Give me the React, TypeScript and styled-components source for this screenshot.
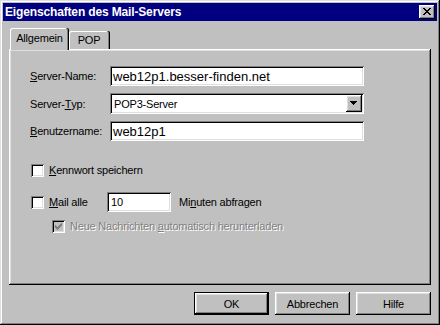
import React from 'react'
import styled, { createGlobalStyle, css } from 'styled-components'

const GlobalStyle = createGlobalStyle`
  html, body {
    margin: 0;
    padding: 0;
    background: #c0c0c0;
  }
  body {
    font-family: "Liberation Sans", Arial, sans-serif;
    font-size: 11px;
    letter-spacing: -0.2px;
    color: #000;
  }
  * {
    box-sizing: border-box;
  }
`

const raised = css`
  box-shadow: inset -1px -1px #000, inset 1px 1px #fff, inset -2px -2px #808080, inset 2px 2px #dfdfdf;
`

const sunken = css`
  box-shadow: inset 1px 1px #808080, inset -1px -1px #fff, inset 2px 2px #000, inset -2px -2px #dfdfdf;
`

const Window = styled.div`
  width: 440px;
  height: 325px;
  padding: 3px;
  background: #c0c0c0;
  display: flex;
  flex-direction: column;
  box-shadow: inset -1px -1px #000, inset 1px 1px #dfdfdf, inset -2px -2px #808080, inset 2px 2px #fff;
`

const TitleBar = styled.div`
  height: 18px;
  background: #000080;
  display: flex;
  align-items: center;
  justify-content: space-between;
  padding: 0 2px 0 2px;
`

const Title = styled.span`
  color: #fff;
  font-weight: bold;
  font-size: 12px;
  letter-spacing: -0.15px;
`

const CloseButton = styled.div`
  width: 16px;
  height: 14px;
  background: #c0c0c0;
  display: flex;
  align-items: center;
  justify-content: center;
  padding: 0 1px 1px 0;
  ${raised}
`

const Body = styled.div`
  flex: 1;
  display: flex;
  flex-direction: column;
  padding: 7px 6px 0 6px;
`

const TabRow = styled.div`
  height: 21px;
  display: flex;
  align-items: flex-end;
  padding-left: 1px;
  position: relative;
  z-index: 1;
`

const Tab = styled.div<{ $active?: boolean; $width: number }>`
  width: ${p => p.$width}px;
  background: #c0c0c0;
  display: flex;
  align-items: center;
  justify-content: center;
  border-radius: 2px 2px 0 0;
  box-shadow: inset -1px 0 #000, inset -2px 0 #808080, inset 1px 1px #fff;
  ${p => p.$active
    ? css`
      height: 22px;
      margin-bottom: -1px;
      padding-bottom: 2px;
    `
    : css`
      height: 18px;
      padding: 0 2px 0 1px;
    `}
`

const Panel = styled.div`
  width: 422px;
  height: 236px;
  background: #c0c0c0;
  padding: 17px 0 0 21px;
  display: flex;
  flex-direction: column;
  box-shadow: inset -1px -1px #000, inset 1px 1px #fff, inset -2px -2px #808080, inset 2px 2px #dfdfdf;
`

const FormGrid = styled.div`
  display: grid;
  grid-template-columns: 80px 254px;
  grid-template-rows: 20px 21px 20px;
  row-gap: 7px;
`

const Label = styled.div`
  display: flex;
  align-items: center;
`

const Key = styled.span`
  text-decoration: underline;
  text-underline-offset: 1px;
`

const Field = styled.div<{ $big?: boolean }>`
  background: #fff;
  display: flex;
  align-items: center;
  padding: 0 3px 0 ${p => (p.$big ? 3 : 4)}px;
  font-size: ${p => (p.$big ? 13 : 11)}px;
  letter-spacing: ${p => (p.$big ? 0 : -0.2)}px;
  white-space: nowrap;
  overflow: hidden;
  ${sunken}
`

const Combo = styled(Field)`
  justify-content: space-between;
  padding: 2px 2px 2px 4px;
`

const DropButton = styled.div`
  width: 16px;
  height: 17px;
  background: #c0c0c0;
  display: flex;
  align-items: center;
  justify-content: center;
  padding: 0 1px 1px 0;
  ${raised}
`

const CheckRow = styled.div<{ $top: number; $indent?: number }>`
  height: 20px;
  display: flex;
  align-items: center;
  margin-top: ${p => p.$top}px;
  padding-left: ${p => p.$indent ?? 1}px;
`

const Box = styled.div<{ $disabled?: boolean }>`
  width: 13px;
  height: 13px;
  flex: none;
  background: ${p => (p.$disabled ? '#c0c0c0' : '#fff')};
  display: flex;
  align-items: center;
  justify-content: center;
  ${sunken}
`

const CheckText = styled.span<{ $width?: number; $gap?: number; $disabled?: boolean }>`
  margin-left: ${p => p.$gap ?? 5}px;
  ${p => p.$width && css`width: ${p.$width}px;`}
  ${p => p.$disabled && css`
    color: #808080;
    text-shadow: 1px 1px #fff;
  `}
`

const SmallField = styled(Field)`
  width: 64px;
  height: 20px;
`

const AfterText = styled.span`
  margin-left: 8px;
`

const ButtonRow = styled.div`
  display: flex;
  justify-content: flex-end;
  gap: 6px;
  margin-top: 7px;
`

const Button = styled.div<{ $default?: boolean }>`
  width: 75px;
  height: 23px;
  background: #c0c0c0;
  display: flex;
  align-items: center;
  justify-content: center;
  ${p => p.$default
    ? css`
      box-shadow: inset 0 0 0 1px #000, inset -2px -2px #000, inset 2px 2px #fff, inset -3px -3px #808080, inset 3px 3px #dfdfdf;
    `
    : raised}
`

const CloseGlyph = () => (
  <svg width="8" height="7" viewBox="0 0 8 7" shapeRendering="crispEdges">
    <path
      d="M0 0h2v1H0zM6 0h2v1H6zM1 1h2v1H1zM5 1h2v1H5zM2 2h4v1H2zM3 3h2v1H3zM2 4h4v1H2zM1 5h2v1H1zM5 5h2v1H5zM0 6h2v1H0zM6 6h2v1H6z"
      fill="#000"
    />
  </svg>
)

const ArrowDown = () => (
  <svg width="7" height="4" viewBox="0 0 7 4" shapeRendering="crispEdges">
    <path d="M0 0h7v1H0zM1 1h5v1H1zM2 2h3v1H2zM3 3h1v1H3z" fill="#000" />
  </svg>
)

const Check = ({ color }: { color: string }) => (
  <svg width="7" height="7" viewBox="0 0 7 7" shapeRendering="crispEdges">
    <path
      d="M6 0h1v1H6zM5 1h2v1H5zM0 2h1v1H0zM4 2h3v1H4zM0 3h2v1H0zM3 3h3v1H3zM0 4h5v1H0zM1 5h3v1H1zM2 6h1v1H2z"
      fill={color}
    />
  </svg>
)

export default function App() {
  return (
    <>
      <GlobalStyle />
      <Window>
        <TitleBar>
          <Title>Eigenschaften des Mail-Servers</Title>
          <CloseButton>
            <CloseGlyph />
          </CloseButton>
        </TitleBar>
        <Body>
          <TabRow>
            <Tab $active $width={59}>Allgemein</Tab>
            <Tab $width={41}>POP</Tab>
          </TabRow>
          <Panel>
            <FormGrid>
              <Label><Key>S</Key>erver-Name:</Label>
              <Field $big>web12p1.besser-finden.net</Field>
              <Label>Server-<Key>T</Key>yp:</Label>
              <Combo>
                <span>POP3-Server</span>
                <DropButton>
                  <ArrowDown />
                </DropButton>
              </Combo>
              <Label><Key>B</Key>enutzername:</Label>
              <Field $big>web12p1</Field>
            </FormGrid>

            <CheckRow $top={19}>
              <Box />
              <CheckText><Key>K</Key>ennwort speichern</CheckText>
            </CheckRow>

            <CheckRow $top={12}>
              <Box />
              <CheckText $width={58}><Key>M</Key>ail alle</CheckText>
              <SmallField>10</SmallField>
              <AfterText>Mi<Key>n</Key>uten abfragen</AfterText>
            </CheckRow>

            <CheckRow $top={4} $indent={22}>
              <Box $disabled>
                <Check color="#808080" />
              </Box>
              <CheckText $gap={5} $disabled>
                Neue Nachrichten <Key>a</Key>utomatisch herunterladen
              </CheckText>
            </CheckRow>
          </Panel>
          <ButtonRow>
            <Button $default>OK</Button>
            <Button>Abbrechen</Button>
            <Button>Hilfe</Button>
          </ButtonRow>
        </Body>
      </Window>
    </>
  )
}
